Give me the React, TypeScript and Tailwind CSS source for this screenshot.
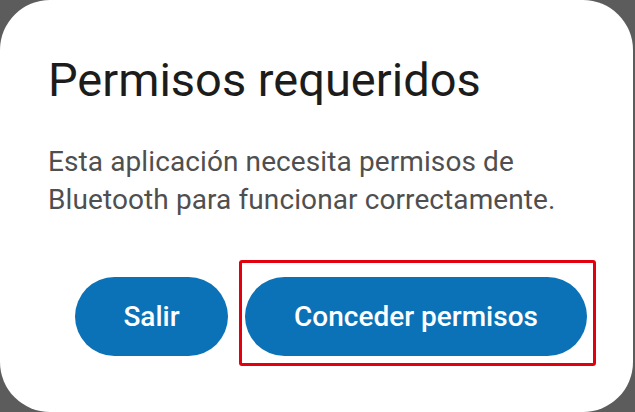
import React from "react";

export default function App() {
  return (
    <div
      className="w-[635px] h-[412px] bg-[#5c5c5c] overflow-hidden"
      style={{ fontFamily: "Roboto, 'Noto Sans', sans-serif" }}
    >
      <div className="w-[633px] h-[412px] bg-white rounded-[50px] flex flex-col pl-[48px] pr-[46px] pt-[52px]">
        <h1 className="text-[47px] leading-[56px] text-[#1c1c1c] font-normal">
          Permisos requeridos
        </h1>
        <p className="mt-[35px] text-[28px] leading-[38px] text-[#4f4f4f] tracking-[0.1px] whitespace-nowrap">
          Esta aplicación necesita permisos de
          <br />
          Bluetooth para funcionar correctamente.
        </p>
        <div className="mt-[58px] flex justify-end gap-[17px]">
          <button className="w-[153px] h-[79px] rounded-full bg-[#0b72b8] text-white text-[28px] font-medium">
            Salir
          </button>
          <div className="relative">
            <button className="w-[342px] h-[79px] rounded-full bg-[#0b72b8] text-white text-[28px] font-medium">
              Conceder permisos
            </button>
            <span className="absolute left-[-6px] right-[-9px] top-[-17px] bottom-[-10px] border-[3px] border-[#e2000e] rounded-[3px] pointer-events-none" />
          </div>
        </div>
      </div>
    </div>
  );
}
